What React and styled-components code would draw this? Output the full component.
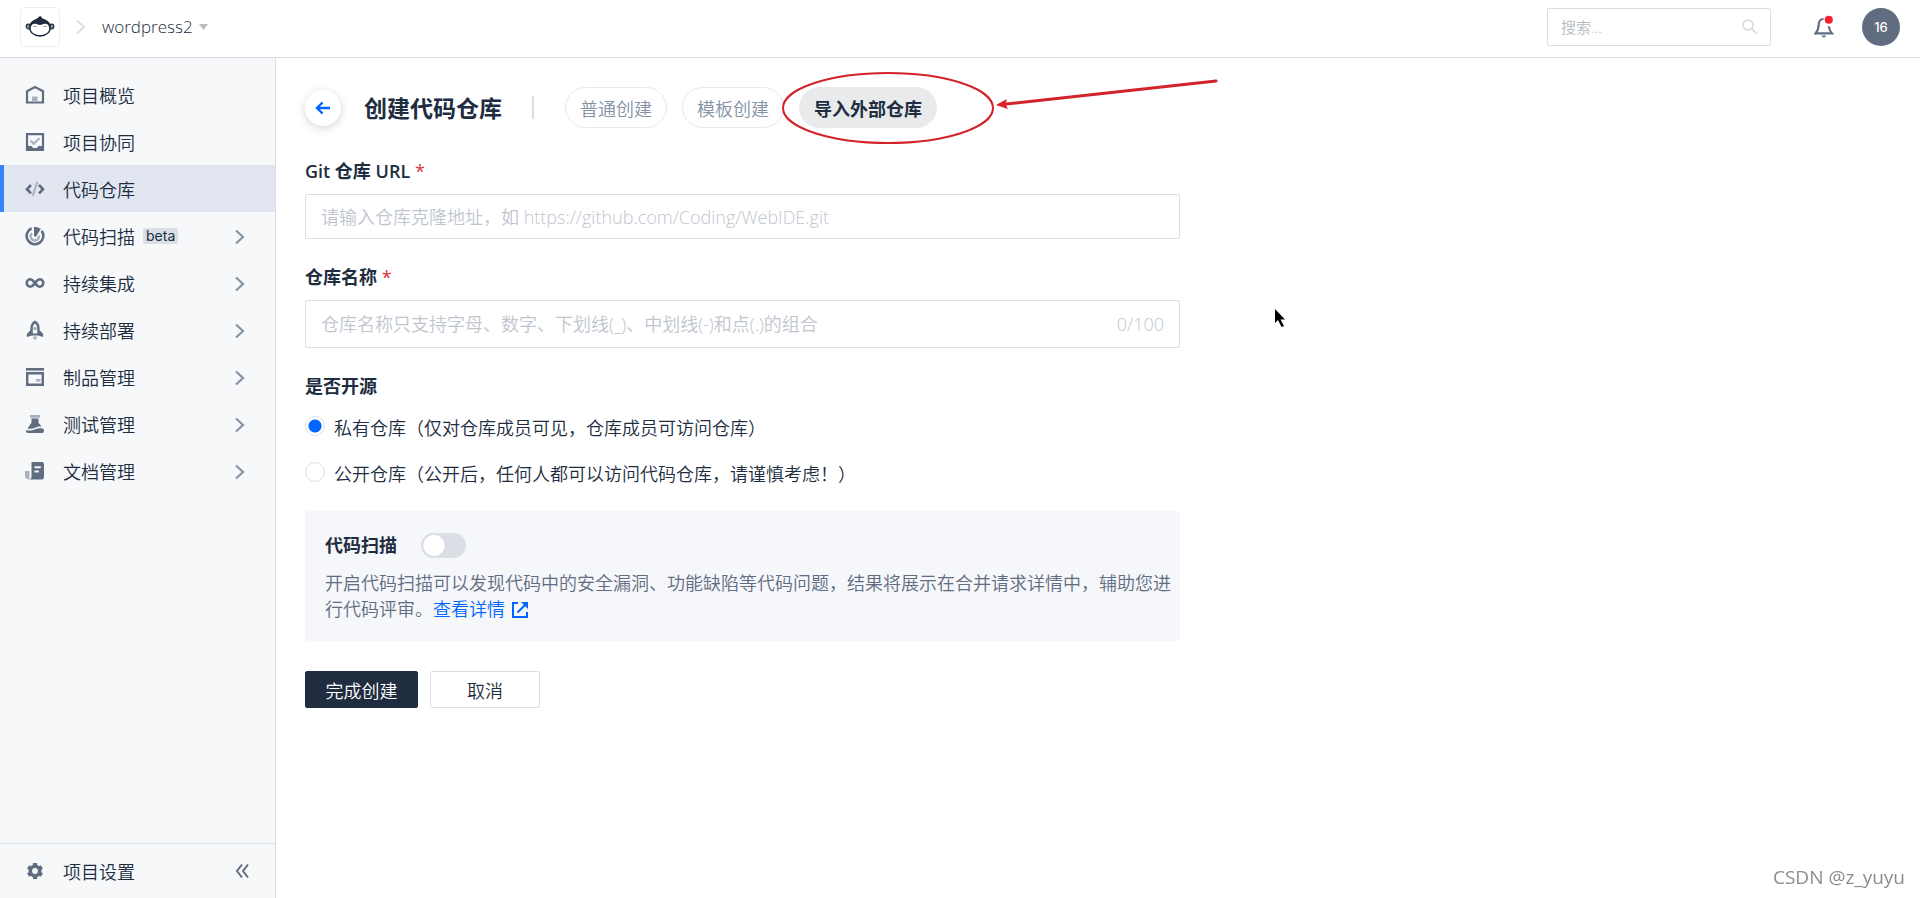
import React, { useState } from "react";
import styled, { createGlobalStyle } from "styled-components";

const GlobalStyle = createGlobalStyle`
  * {
    box-sizing: border-box;
  }

  body {
    margin: 0;
    background: #fff;
    color: #202d40;
    font-family: "Open Sans", "Noto Sans CJK SC", sans-serif;
    font-size: 18px;
    font-weight: 350;
  }

  button,
  input {
    font: inherit;
    color: inherit;
  }

  svg {
    display: block;
    flex-shrink: 0;
  }
`;

const Page = styled.div`
  display: flex;
  flex-direction: column;
  min-height: 100vh;
`;

const Body = styled.div`
  display: flex;
  flex: 1;
`;

/* ---------- Top bar ---------- */

const TopBar = styled.header`
  display: flex;
  align-items: center;
  height: 58px;
  padding: 0 20px 4px;
  border-bottom: 1px solid #dadde2;
`;

const LogoLink = styled.a`
  display: flex;
  align-items: center;
  justify-content: center;
  width: 40px;
  height: 40px;
  border: 1px solid #ebedf0;
  border-radius: 4px;
`;

const Crumb = styled.span`
  margin: 0 16px;
`;

const ProjectButton = styled.button`
  display: flex;
  align-items: center;
  gap: 6px;
  padding: 0;
  border: 0;
  background: none;
  font-size: 17px;
`;

const TopActions = styled.div`
  display: flex;
  align-items: center;
  margin-left: auto;
`;

const SearchBox = styled.label`
  display: flex;
  align-items: center;
  width: 224px;
  height: 38px;
  padding: 0 13px;
  border: 1px solid #dadfe6;
  border-radius: 2px;
`;

const SearchInput = styled.input`
  flex: 1;
  min-width: 0;
  padding: 0;
  border: 0;
  outline: 0;
  background: none;
  font-size: 15px;

  &::placeholder {
    color: #b4bac2;
    opacity: 1;
  }
`;

const BellButton = styled.button`
  display: flex;
  margin: 0 28px 0 43px;
  padding: 0;
  border: 0;
  background: none;
`;

const Avatar = styled.button`
  width: 38px;
  height: 38px;
  padding: 0;
  border: 0;
  border-radius: 50%;
  background: #606c80;
  color: #fff;
  font-family: Inter, sans-serif;
  font-size: 13px;
  font-weight: 500;
`;

/* ---------- Sidebar ---------- */

const Sidebar = styled.aside`
  display: flex;
  flex-direction: column;
  flex-shrink: 0;
  width: 276px;
  border-right: 1px solid #dadfe6;
  background: #f6f8fa;
`;

const Nav = styled.nav`
  display: flex;
  flex: 1;
  flex-direction: column;
  padding-top: 13px;
`;

const NavItem = styled.a`
  display: flex;
  align-items: center;
  height: 47px;
  padding: 0 30px 0 21px;
  border-left: 4px solid ${(props) => (props.$active ? "#3384ff" : "transparent")};
  background: ${(props) => (props.$active ? "#e1e6f0" : "transparent")};
  color: #202d40;
  text-decoration: none;
`;

const NavText = styled.span`
  margin-left: 18px;
`;

const Badge = styled.span`
  margin-left: 8px;
  padding: 0 3px;
  border-radius: 2px;
  background: #dadfe6;
  font-family: Inter, sans-serif;
  font-size: 14px;
  font-weight: 400;
  line-height: 16px;
`;

const NavArrow = styled.span`
  margin-left: auto;
  padding-top: 3px;
`;

const SidebarFooter = styled.div`
  display: flex;
  align-items: center;
  height: 55px;
  padding-right: 26px;
  border-top: 1px solid #dadfe6;
`;

const SettingsLink = styled(NavItem)`
  flex: 1;
`;

const CollapseButton = styled.button`
  padding: 0;
  border: 0;
  background: none;
`;

/* ---------- Content ---------- */

const Main = styled.main`
  flex: 1;
  min-width: 0;
  padding: 29px 29px 40px;
`;

const TitleRow = styled.div`
  display: flex;
  align-items: center;
`;

const BackLink = styled.a`
  display: flex;
  align-items: center;
  justify-content: center;
  width: 36px;
  height: 36px;
  border-radius: 50%;
  box-shadow: 0 2px 8px rgba(32, 45, 64, 0.2);
`;

const Title = styled.h1`
  margin: 0 0 0 23px;
  font-size: 23px;
  font-weight: 700;
  line-height: 32px;
`;

const TitleDivider = styled.span`
  width: 2px;
  height: 23px;
  margin: 0 31px 0 30px;
  background: #dadfe6;
`;

const Tabs = styled.div`
  display: flex;
  gap: 15px;
`;

const TabSlot = styled.div`
  position: relative;
`;

const Tab = styled.button`
  height: 41px;
  padding: 0 14px;
  border: 1px solid ${(props) => (props.$active ? "#e9eaec" : "#e6e9ed")};
  border-radius: 21px;
  background: ${(props) => (props.$active ? "#e9eaec" : "#fff")};
  color: ${(props) => (props.$active ? "#202d40" : "#8592a6")};
  font-weight: ${(props) => (props.$active ? 700 : 350)};
`;

const Callout = styled.svg`
  position: absolute;
  top: -17px;
  left: -19px;
  pointer-events: none;
`;

const Form = styled.form`
  max-width: 875px;
  margin-top: 31px;
`;

const Field = styled.div`
  margin-bottom: 26px;
`;

const FieldLabel = styled.label`
  display: block;
  margin-bottom: 10px;
  font-weight: 600;
  line-height: 25px;
`;

const Required = styled.span`
  color: #d9363e;
  font-weight: 400;
`;

const InputBox = styled.div`
  display: flex;
  align-items: center;
  height: ${(props) => (props.$tall ? "48px" : "45px")};
  padding: 0 15px;
  border: 1px solid #dadfe6;
  border-radius: 2px;
`;

const TextInput = styled.input`
  flex: 1;
  min-width: 0;
  height: 100%;
  padding: 0;
  border: 0;
  outline: 0;
  background: none;

  &::placeholder {
    color: #c0c6cf;
    opacity: 1;
  }
`;

const Counter = styled.span`
  color: #c0c6cf;
`;

const RadioGroup = styled.fieldset`
  display: flex;
  flex-direction: column;
  gap: 20px;
  margin: 0;
  padding: 0;
  border: 0;
`;

const Legend = styled.legend`
  margin-bottom: 16px;
  padding: 0;
  font-weight: 600;
  line-height: 25px;
`;

const RadioLabel = styled.label`
  display: flex;
  align-items: flex-start;
  gap: 9px;
  line-height: 26px;
`;

const Radio = styled.input`
  flex-shrink: 0;
  width: 20px;
  height: 20px;
  margin: 1px 0 0;
  border: 1px solid #dadfe6;
  border-radius: 50%;
  background: #fff;
  appearance: none;

  &:checked {
    background: radial-gradient(circle, #0066ff 6px, #fff 7px);
  }
`;

const ScanPanel = styled.section`
  margin-top: 24px;
  padding: 20px 8px 19px 20px;
  border-radius: 2px;
  background: #f5f7fa;
`;

const ScanHead = styled.label`
  display: flex;
  align-items: center;
  gap: 24px;
  line-height: 28px;
  font-weight: 600;
`;

const Switch = styled.input`
  width: 45px;
  height: 25px;
  margin: 0;
  border-radius: 13px;
  background: radial-gradient(circle at 13px 50%, #fff 10px, transparent 11px) #dadfe6;
  appearance: none;

  &:checked {
    background: radial-gradient(circle at 32px 50%, #fff 10px, transparent 11px) #0066ff;
  }
`;

const ScanText = styled.p`
  margin: 11px 0 0;
  color: #606c80;
  line-height: 26px;
`;

const DetailLink = styled.a`
  color: #0066ff;
  text-decoration: none;

  svg {
    display: inline-block;
    margin-left: 7px;
    vertical-align: -2px;
  }
`;

const Actions = styled.div`
  display: flex;
  gap: 12px;
  margin-top: 30px;
`;

const ActionButton = styled.button`
  min-width: ${(props) => (props.$primary ? "113px" : "110px")};
  height: 37px;
  padding: 0 19px;
  border: 1px solid ${(props) => (props.$primary ? "#202d40" : "#dadfe6")};
  border-radius: 2px;
  background: ${(props) => (props.$primary ? "#202d40" : "#fff")};
  color: ${(props) => (props.$primary ? "#fff" : "#202d40")};
`;

const Watermark = styled.div`
  position: fixed;
  right: 15px;
  bottom: 7px;
  color: #8c8c8c;
  font-size: 19px;
  font-weight: 400;
  line-height: 28px;
  text-shadow: 1px 1px 0 #fff;
`;

const Pointer = styled.svg`
  position: absolute;
  top: 309px;
  left: 1275px;
`;

/* ---------- Icons ---------- */

const DARK = "#606c80";
const LIGHT = "#a9b1bd";

const iconShapes = {
  overview: (
    <>
      <path d="M2 6.200 10 2l8 4.200V17.500H2z" fill="none" stroke={DARK} strokeWidth="2.200" />
      <path d="M7 11.500h5.500v5H7z" fill={LIGHT} />
    </>
  ),
  teamwork: (
    <>
      <path d="M2 2.200h16v15.600H2z" fill="none" stroke={DARK} strokeWidth="2.200" />
      <path d="M2 14h4.500l1.500 2h4l1.500-2H18v4H2z" fill={DARK} />
      <path d="m5.500 8.500 3.200 3.200 5.800-5.500" fill="none" stroke={LIGHT} strokeWidth="2.200" />
    </>
  ),
  code: (
    <>
      <path d="m6 6-4 4.200 4 4.200M14 6l4 4.200-4 4.200" fill="none" stroke={DARK} strokeWidth="2.600" />
      <path d="m12.200 3-4.400 14" stroke={LIGHT} strokeWidth="2" />
    </>
  ),
  scan: (
    <>
      <path d="M6.600 2.300a8.300 8.300 0 1 0 10 2.600" fill="none" stroke={DARK} strokeWidth="2.600" />
      <path d="M7 7.200a4.200 4.200 0 1 0 7 2.300" fill="none" stroke={LIGHT} strokeWidth="2.400" />
      <path d="M9 1h2.500l4.300 1.800-5 8.200L9 10z" fill={DARK} />
    </>
  ),
  integration: (
    <path
      d="M10 10C8.500 8 7.500 6.300 5.400 6.300a3.700 3.700 0 0 0 0 7.400C7.500 13.700 8.500 12 10 10s2.500-3.700 4.600-3.700a3.700 3.700 0 0 1 0 7.400C12.500 13.700 11.500 12 10 10z"
      fill="none"
      stroke={DARK}
      strokeWidth="2.600"
    />
  ),
  deploy: (
    <>
      <path
        fillRule="evenodd"
        d="M10 .5c3 1.500 4.600 4.300 4.600 7.300v2.500l3.600 3.600v3l-5-1.400H6.800l-5 1.400v-3l3.600-3.600V7.800c0-3 1.600-5.800 4.600-7.300zm0 3C8.500 4.800 7.800 6.200 7.800 8v5.500h4.400V8c0-1.800-.7-3.200-2.200-4.500z"
        fill={DARK}
      />
      <circle cx="10" cy="8.500" r="1.700" fill={LIGHT} />
      <path d="M8 16.500h4c0 1.800-.8 3-2 3.500-1.200-.5-2-1.700-2-3.500z" fill={LIGHT} />
    </>
  ),
  artifact: (
    <>
      <path d="M1 1h18v2.600H1z" fill={DARK} />
      <path d="M2.200 6.200h15.600v11.600H2.200z" fill="none" stroke={DARK} strokeWidth="2.400" />
      <path d="M11 12h4.500v2.600H11z" fill={LIGHT} />
    </>
  ),
  test: (
    <>
      <path d="M5 1h10v2.800H5z" fill={LIGHT} />
      <path
        d="M6.500 4.500h7v4.300l3 3.700c-3-.4-4.500.2-6.500 1.300-2 1-4.500 1.300-7.500.7l4-5.700z"
        fill={DARK}
      />
      <path
        d="M1.200 16.300c4 .7 6.600.2 9-1 2.500-1.200 4.500-1.500 7.700-.8l1 1.500c.6 1.500-.3 3-1.900 3H3c-1.500 0-2.500-1.300-1.800-2.700z"
        fill={DARK}
      />
    </>
  ),
  docs: (
    <>
      <path d="M0 10h4.500v8.500C2 18.500 0 17.500 0 15z" fill={LIGHT} />
      <path
        fillRule="evenodd"
        d="M6.500 1h10.300A2.200 2.200 0 0 1 19 3.200V16.300a2.200 2.200 0 0 1-2.200 2.200H4.800c1-.5 1.700-1.500 1.700-2.700zM9.500 5.300v1.900h6.300V5.300zm0 4.200v1.900h4.300V9.500z"
        fill={DARK}
      />
    </>
  ),
  settings: (
    <>
      <circle cx="10" cy="10" r="4.700" fill="none" stroke={DARK} strokeWidth="3.600" />
      <path
        d="M10 2v3M10 15v3M3.100 6l2.600 1.500M14.300 12.500l2.600 1.500M3.100 14l2.600-1.500M14.300 7.500 16.900 6"
        stroke={DARK}
        strokeWidth="4.200"
      />
    </>
  ),
};

function Icon({ name }) {
  return (
    <svg width="20" height="20" viewBox="0 0 20 20" aria-hidden="true">
      {iconShapes[name]}
    </svg>
  );
}

function MonkeyLogo() {
  return (
    <svg width="30" height="24" viewBox="0 0 30 24" aria-hidden="true">
      <circle cx="3.500" cy="11.500" r="2.300" fill="#8b94a3" stroke="#202d40" strokeWidth="1.200" />
      <circle cx="26.500" cy="11.500" r="2.300" fill="#8b94a3" stroke="#202d40" strokeWidth="1.200" />
      <ellipse cx="15" cy="12.500" rx="11" ry="9.300" fill="#202d40" />
      <path d="m11.500 4 3.700-3.200L18 4z" fill="#202d40" />
      <path
        d="M5.800 13.500c0-3.500 2-4.800 4.400-4.800 2 0 3.300 1.300 4.800 1.300s2.800-1.300 4.800-1.300c2.400 0 4.400 1.300 4.400 4.800 0 4.200-4.200 6.500-9.200 6.500s-9.200-2.300-9.200-6.500z"
        fill="#fff"
      />
      <path d="M8.500 11.500h3M18.500 11.500h3" stroke="#8b94a3" strokeWidth="1" />
    </svg>
  );
}

function ChevronRight({ color, width }) {
  return (
    <svg width="10" height="16" viewBox="0 0 10 16" fill="none" aria-hidden="true">
      <path d="m1 1.500 7 6.500-7 6.500" stroke={color} strokeWidth={width} />
    </svg>
  );
}

function BellIcon() {
  return (
    <svg width="20" height="24" viewBox="0 0 20 24" fill="none" aria-hidden="true">
      <path
        d="M9.500 4C6.400 4 4.700 6.500 4.700 9.500c0 4.200-1.200 6.500-3 8.800h16.100c-1.700-2-2.700-4-2.900-7"
        stroke={DARK}
        strokeWidth="2.200"
      />
      <path d="M7.500 20.500h4.500c-.3 1.300-1.100 2-2.200 2s-2-.7-2.300-2z" fill={DARK} />
      <circle cx="14.800" cy="4.800" r="4" fill="#f5222d" />
    </svg>
  );
}

/* ---------- Data ---------- */

const navItems = [
  { icon: "overview", text: "项目概览" },
  { icon: "teamwork", text: "项目协同" },
  { icon: "code", text: "代码仓库", active: true },
  { icon: "scan", text: "代码扫描", badge: "beta", expandable: true },
  { icon: "integration", text: "持续集成", expandable: true },
  { icon: "deploy", text: "持续部署", expandable: true },
  { icon: "artifact", text: "制品管理", expandable: true },
  { icon: "test", text: "测试管理", expandable: true },
  { icon: "docs", text: "文档管理", expandable: true },
];

function Header() {
  return (
    <TopBar>
      <LogoLink href="#" aria-label="CODING">
        <MonkeyLogo />
      </LogoLink>
      <Crumb>
        <ChevronRight color="#dadfe6" width="2" />
      </Crumb>
      <ProjectButton type="button">
        wordpress2
        <svg width="9" height="6" viewBox="0 0 9 6" aria-hidden="true">
          <path d="M0 0h9L4.500 6z" fill="#b8bcc2" />
        </svg>
      </ProjectButton>
      <TopActions>
        <SearchBox>
          <SearchInput type="text" placeholder="搜索..." aria-label="搜索" />
          <svg width="15" height="15" viewBox="0 0 15 15" fill="none" aria-hidden="true">
            <circle cx="6" cy="6" r="5" stroke="#d0d4da" strokeWidth="1.300" />
            <path d="m9.500 9.500 5 5" stroke="#d0d4da" strokeWidth="1.300" />
          </svg>
        </SearchBox>
        <BellButton type="button" aria-label="通知">
          <BellIcon />
        </BellButton>
        <Avatar type="button">16</Avatar>
      </TopActions>
    </TopBar>
  );
}

function SideMenu() {
  return (
    <Sidebar>
      <Nav>
        {navItems.map((item) => (
          <NavItem key={item.text} href="#" $active={item.active}>
            <Icon name={item.icon} />
            <NavText>{item.text}</NavText>
            {item.badge && <Badge>{item.badge}</Badge>}
            {item.expandable && (
              <NavArrow>
                <ChevronRight color="#8592a6" width="2.200" />
              </NavArrow>
            )}
          </NavItem>
        ))}
      </Nav>
      <SidebarFooter>
        <SettingsLink href="#">
          <Icon name="settings" />
          <NavText>项目设置</NavText>
        </SettingsLink>
        <CollapseButton type="button" aria-label="收起">
          <svg width="14" height="16" viewBox="0 0 14 16" fill="none" aria-hidden="true">
            <path d="M7 1.500 2 8l5 6.500M13 1.500 8 8l5 6.500" stroke={DARK} strokeWidth="2" />
          </svg>
        </CollapseButton>
      </SidebarFooter>
    </Sidebar>
  );
}

export default function App() {
  const [visibility, setVisibility] = useState("private");
  const [repoName, setRepoName] = useState("");

  return (
    <Page>
      <GlobalStyle />
      <Header />
      <Body>
        <SideMenu />
        <Main>
          <TitleRow>
            <BackLink href="#" aria-label="返回">
              <svg width="16" height="14" viewBox="0 0 16 14" fill="none" aria-hidden="true">
                <path d="M15 7H2M7.500 1.500 2 7l5.500 5.500" stroke="#0066ff" strokeWidth="2.400" />
              </svg>
            </BackLink>
            <Title>创建代码仓库</Title>
            <TitleDivider />
            <Tabs>
              <Tab type="button">普通创建</Tab>
              <Tab type="button">模板创建</Tab>
              <TabSlot>
                <Tab type="button" $active>
                  导入外部仓库
                </Tab>
                <Callout width="440" height="80" viewBox="0 0 440 80" fill="none" aria-hidden="true">
                  <ellipse cx="108" cy="38" rx="105" ry="35" stroke="#d2232a" strokeWidth="2" />
                  <path d="M436 11 226 34" stroke="#d2232a" strokeWidth="3" strokeLinecap="round" />
                  <path d="m216 35 11-6-1.500 5 2.500 5z" fill="#e01f26" />
                </Callout>
              </TabSlot>
            </Tabs>
          </TitleRow>

          <Form onSubmit={(e) => e.preventDefault()}>
            <Field>
              <FieldLabel htmlFor="git-url">
                Git 仓库 URL <Required>*</Required>
              </FieldLabel>
              <InputBox>
                <TextInput
                  id="git-url"
                  type="text"
                  placeholder="请输入仓库克隆地址，如 https://github.com/Coding/WebIDE.git"
                />
              </InputBox>
            </Field>
            <Field>
              <FieldLabel htmlFor="repo-name">
                仓库名称 <Required>*</Required>
              </FieldLabel>
              <InputBox $tall>
                <TextInput
                  id="repo-name"
                  type="text"
                  maxLength={100}
                  value={repoName}
                  onChange={(e) => setRepoName(e.target.value)}
                  placeholder="仓库名称只支持字母、数字、下划线(_)、中划线(-)和点(.)的组合"
                />
                <Counter>{repoName.length}/100</Counter>
              </InputBox>
            </Field>

            <RadioGroup>
              <Legend>是否开源</Legend>
              <RadioLabel>
                <Radio
                  type="radio"
                  name="visibility"
                  checked={visibility === "private"}
                  onChange={() => setVisibility("private")}
                />
                私有仓库（仅对仓库成员可见，仓库成员可访问仓库）
              </RadioLabel>
              <RadioLabel>
                <Radio
                  type="radio"
                  name="visibility"
                  checked={visibility === "public"}
                  onChange={() => setVisibility("public")}
                />
                公开仓库（公开后，任何人都可以访问代码仓库，请谨慎考虑！）
              </RadioLabel>
            </RadioGroup>

            <ScanPanel>
              <ScanHead>
                代码扫描
                <Switch type="checkbox" role="switch" />
              </ScanHead>
              <ScanText>
                开启代码扫描可以发现代码中的安全漏洞、功能缺陷等代码问题，结果将展示在合并请求详情中，辅助您进行代码评审。
                <DetailLink href="#">
                  查看详情
                  <svg width="16" height="16" viewBox="0 0 16 16" fill="none" aria-hidden="true">
                    <path d="M6 1H1v14h14v-5" stroke="#0066ff" strokeWidth="2" />
                    <path d="m5.500 10.500 7.500-7.500" stroke="#0066ff" strokeWidth="2" />
                    <path d="M9 0h7v7z" fill="#0066ff" />
                  </svg>
                </DetailLink>
              </ScanText>
            </ScanPanel>

            <Actions>
              <ActionButton type="submit" $primary>
                完成创建
              </ActionButton>
              <ActionButton type="button">取消</ActionButton>
            </Actions>
          </Form>
        </Main>
      </Body>
      <Pointer width="12" height="20" viewBox="0 0 12 20" aria-hidden="true">
        <path d="M0 0v14l3-3 3.500 7 2.500-1-3.500-6.500H10z" fill="#000" />
      </Pointer>
      <Watermark>CSDN @z_yuyu</Watermark>
    </Page>
  );
}
